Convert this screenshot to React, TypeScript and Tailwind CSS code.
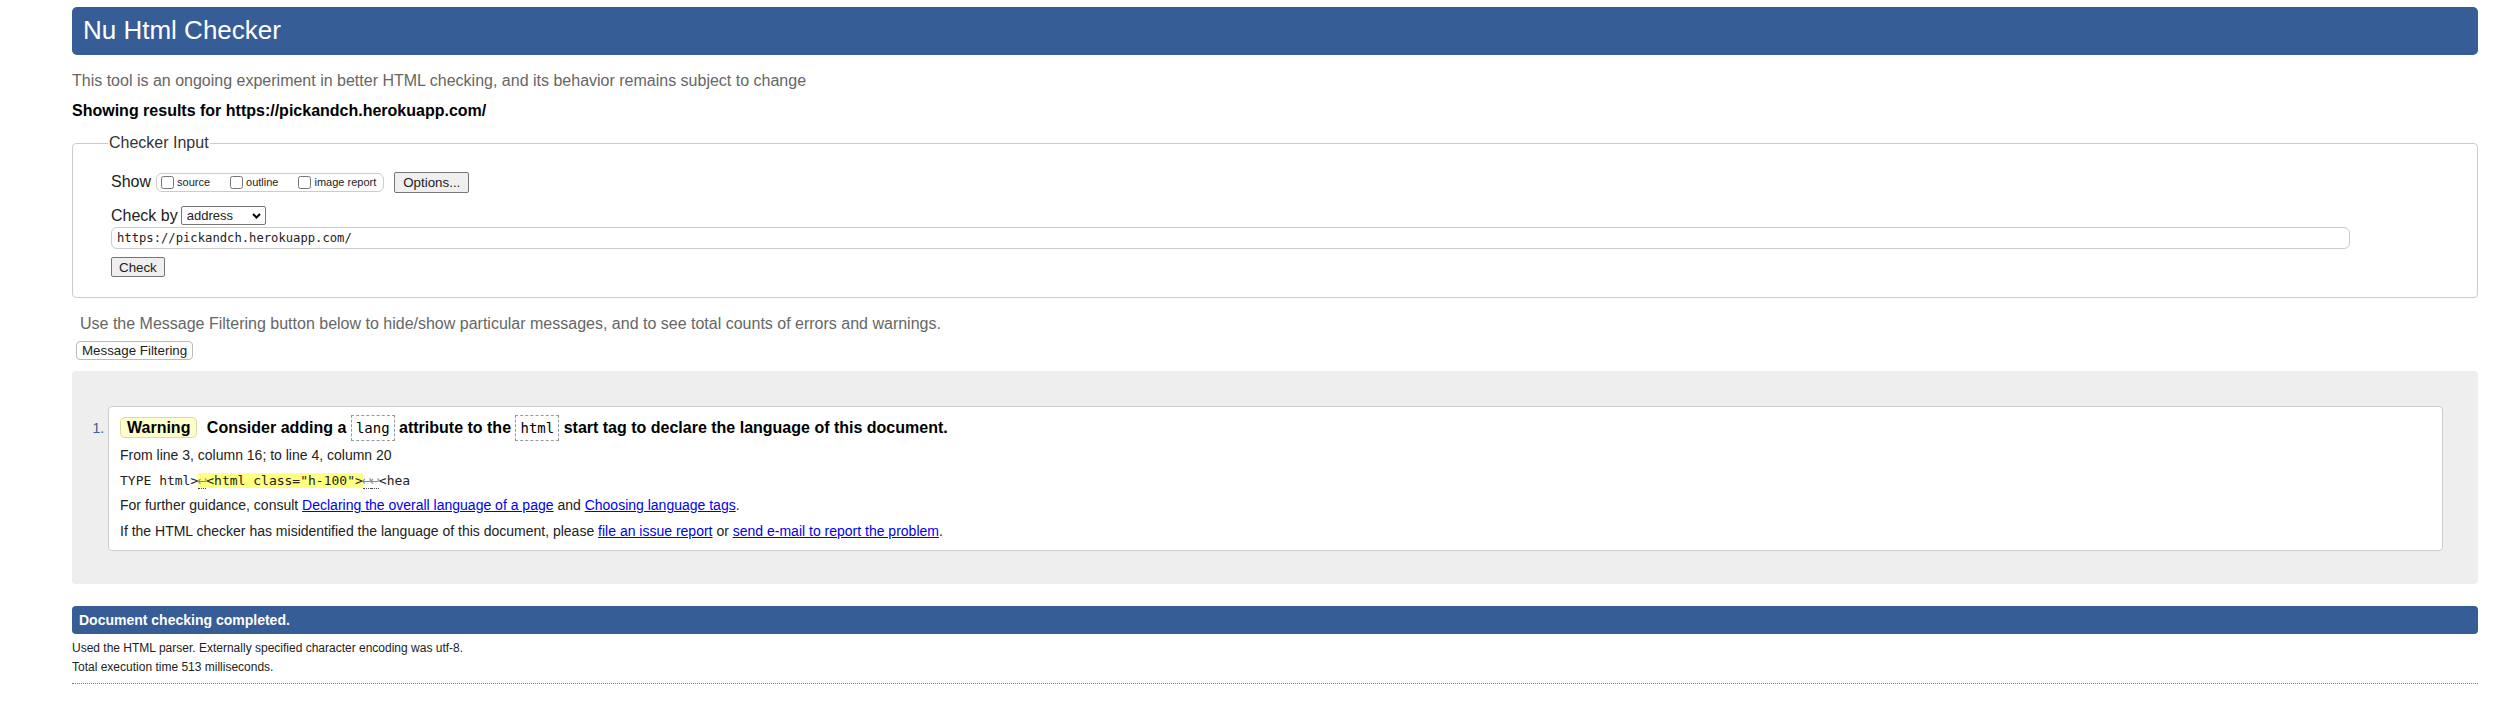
import React from 'react'

const Checkbox = ({ label }: { label: string }) => (
  <label className="flex items-center">
    <input type="checkbox" className="m-0 h-[13px] w-[13px]" />
    <span className="ml-[3px]">{label}</span>
  </label>
)

const Ret = () => (
  <span className="inline-flex w-[8px] justify-center border-b border-dotted border-[#444] font-['DejaVu_Sans',sans-serif] text-[12px] leading-[14px] text-[#888]">
    ↩
  </span>
)

const Code = ({ children }: { children: React.ReactNode }) => (
  <code className="border border-dashed border-[#999] px-[4px] py-[4px] font-['DejaVu_Sans_Mono','Liberation_Mono',monospace] text-[14px] font-normal">
    {children}
  </code>
)

const Link = ({ children }: { children: React.ReactNode }) => (
  <a href="#" className="text-[#00e] underline">
    {children}
  </a>
)

const App = () => {
  return (
    <div className="min-h-[711px] bg-white pl-[72px] pr-[40px] pt-[7px] font-['Liberation_Sans',Arial,sans-serif] text-[#222]">
      <h1 className="flex h-[48px] items-center rounded-[5px] bg-[#365d95] pb-[2px] pl-[11px] text-[26px] leading-[30px] text-white">
        Nu Html Checker
      </h1>
      <p className="mt-[16px] text-[16px] leading-[20px] text-[#666]">
        This tool is an ongoing experiment in better HTML checking, and its behavior remains subject to change
      </p>
      <p className="mt-[10px] text-[16px] font-bold leading-[20px] text-black">
        Showing results for https://pickandch.herokuapp.com/
      </p>

      <fieldset className="mt-[12px] rounded-[4px] border border-[#ccc] pb-[20px] pl-[38px] pr-[127px] pt-[19px]">
        <legend className="-ml-[3px] px-[1px] text-[16px] leading-[20px] text-[#333]">
          Checker Input
        </legend>

        <div className="flex h-[21px] items-center">
          <span className="mb-[2px] text-[16px]">Show</span>
          <span className="ml-[5px] flex h-[19px] items-center gap-[20px] rounded-[6px] border border-[#ccc] pl-[4px] pr-[7px] text-[11px]">
            <Checkbox label="source" />
            <Checkbox label="outline" />
            <Checkbox label="image report" />
          </span>
          <button
            type="button"
            className="ml-[10px] h-[21px] rounded-[2px] border border-[#767676] bg-[#efefef] px-[8px] text-[13.33px] leading-[15px]"
          >
            Options...
          </button>
        </div>

        <div className="mt-[13px] flex h-[19px] items-center">
          <span className="text-[16px]">Check by</span>
          <span className="relative ml-[3px] flex">
            <select className="h-[19px] w-[85px] appearance-none rounded-[2px] border border-[#767676] bg-white pl-[5px] text-[13px] leading-[15px]">
              <option>address</option>
            </select>
            <svg
              className="pointer-events-none absolute right-[5px] top-[7px]"
              width="9"
              height="6"
              viewBox="0 0 9 6"
            >
              <path d="M1 1l3.5 3.5L8 1" fill="none" stroke="#000" strokeWidth="2" />
            </svg>
          </span>
        </div>

        <input
          type="text"
          readOnly
          value="https://pickandch.herokuapp.com/"
          className="mt-[2px] block h-[22px] w-full rounded-[6px] border border-[#ccc] pl-[5px] font-['DejaVu_Sans_Mono','Liberation_Mono',monospace] text-[12.2px] text-[#222]"
        />

        <button
          type="button"
          className="mt-[8px] block h-[20px] rounded-[2px] border border-[#767676] bg-[#efefef] px-[7px] text-[13.33px] leading-[15px]"
        >
          Check
        </button>
      </fieldset>

      <p className="ml-[8px] mt-[16px] text-[16px] leading-[20px] text-[#666]">
        Use the Message Filtering button below to hide/show particular messages, and to see total counts of errors and warnings.
      </p>
      <div className="mt-[7px]">
        <button
          type="button"
          className="ml-[4px] block h-[19px] rounded-[4px] border border-[#bbb] bg-white px-[5px] text-[13.33px] leading-[15px]"
        >
          Message Filtering
        </button>
      </div>

      <div className="mt-[11px] rounded-[4px] bg-[#eee] pb-[33px] pl-[36px] pr-[35px] pt-[35px]">
        <ol className="list-decimal marker:text-[#365d95]">
          <li className="rounded-[4px] border border-[#ccc] bg-white pb-[8px] pl-[11px] pr-[11px] pt-[10px] text-[14px]">
            <p className="text-[16px] font-bold leading-[22px] text-black">
              <strong className="mr-[5px] rounded-[5px] border border-[#ddd9a6] bg-[#ffffcc] px-[6px] py-[1px]">
                Warning
              </strong>{' '}
              Consider adding a <Code>lang</Code> attribute to the <Code>html</Code> start tag to declare the
              language of this document.
            </p>
            <p className="mt-[5px] leading-[22px]">From line 3, column 16; to line 4, column 20</p>
            <p className="mt-[4px] whitespace-pre font-['DejaVu_Sans_Mono','Liberation_Mono',monospace] text-[13px] leading-[22px]">
              TYPE html&gt;
              <span className="bg-[#ffff80]">
                <Ret />
                {'<html class="h-100">'}
              </span>
              <Ret />
              <Ret />
              {'<hea'}
            </p>
            <p className="mt-[2px] leading-[22px]">
              For further guidance, consult <Link>Declaring the overall language of a page</Link> and{' '}
              <Link>Choosing language tags</Link>.
            </p>
            <p className="mt-[4px] leading-[22px]">
              If the HTML checker has misidentified the language of this document, please{' '}
              <Link>file an issue report</Link> or <Link>send e-mail to report the problem</Link>.
            </p>
          </li>
        </ol>
      </div>

      <div className="mt-[22px] flex h-[28px] items-center rounded-[4px] bg-[#365d95] pl-[7px] text-[14px] font-bold text-white">
        Document checking completed.
      </div>
      <p className="mt-[5px] text-[12px] leading-[18px]">
        Used the HTML parser. Externally specified character encoding was utf-8.
      </p>
      <p className="mt-[1px] text-[12px] leading-[18px]">Total execution time 513 milliseconds.</p>
      <div className="mt-[7px] border-t border-dotted border-[#777]" />
    </div>
  )
}

export default App
